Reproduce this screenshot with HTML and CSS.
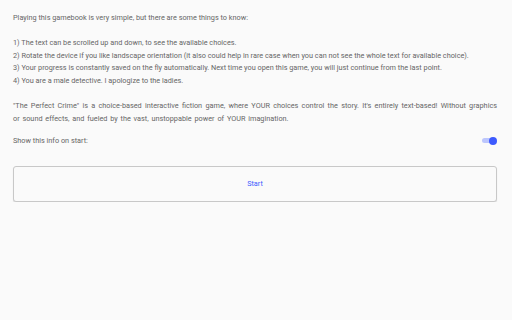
FILE: index.html
```html
<!DOCTYPE html>
<html>
<head>
<meta charset="utf-8">
<link rel="stylesheet" href="styles.css">
</head>
<body>
<div class="page">
  <p class="para">Playing this gamebook is very simple, but there are some things to know:</p>
  <p class="para">1) The text can be scrolled up and down, to see the available choices.<br>2) Rotate the device if you like landscape orientation (it also could help in rare case when you can not see the whole text for available choice).<br>3) Your progress is constantly saved on the fly automatically. Next time you open this game, you will just continue from the last point.<br>4) You are a male detective. I apologize to the ladies.</p>
  <p class="para justify">"The Perfect Crime" is a choice-based interactive fiction game, where YOUR choices control the story. It's entirely text-based! Without graphics or sound effects, and fueled by the vast, unstoppable power of YOUR imagination.</p>
  <div class="row">
    <span>Show this info on start:</span>
    <span class="switch"><span class="track"></span><span class="thumb"></span></span>
  </div>
  <button class="start">Start</button>
</div>
</body>
</html>
```
FILE: styles.css
```css
html, body { margin: 0; padding: 0; background: #fafafa; }
body { font-family: Roboto, "Noto Sans", sans-serif; font-size: 7.3px; color: #666666; }
.page { padding: 12px 15px 0 13px; display: flex; flex-direction: column; }
.para { margin: 0 0 12.6px 0; line-height: 12.6px; }
.justify { text-align: justify; word-spacing: 1px; }
.row { display: flex; justify-content: space-between; align-items: center; height: 12px; margin-top: -3px; }
.switch { position: relative; width: 14px; height: 10px; margin-right: 1px; }
.track { position: absolute; left: 0; top: 2.5px; width: 12px; height: 5px; border-radius: 3px; background: #bcc6fd; }
.thumb { position: absolute; right: -1px; top: 1px; width: 8px; height: 8px; border-radius: 50%; background: #3d5afe; }
.start { margin-top: 19px; height: 36px; width: 100%; background: #fafafa; border: 1px solid #c8c8c8; border-radius: 3px; box-shadow: 0 1px 1px rgba(0,0,0,0.12); font-family: Roboto, sans-serif; font-size: 7.3px; color: #3d5afe; padding: 0; }
```
